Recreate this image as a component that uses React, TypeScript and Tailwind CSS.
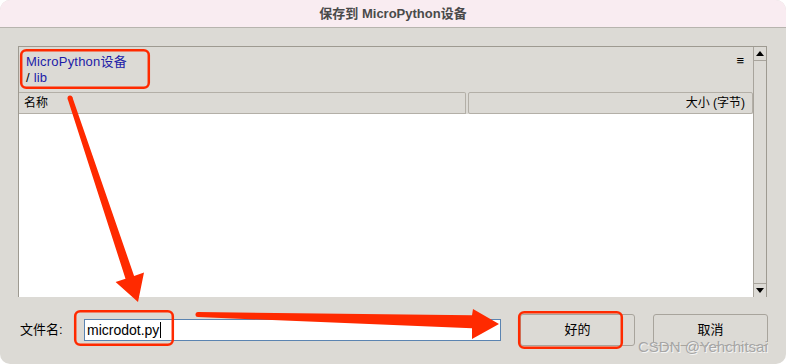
import React from "react";

function Annotations() {
  return (
    <svg
      className="absolute inset-0 pointer-events-none"
      width={786}
      height={364}
      viewBox="0 0 786 364"
    >
      <g fill="none" stroke="#ff2a00" strokeWidth={2.5}>
        <rect x={21.2} y={50.2} width={127.6} height={37.6} rx={5} />
        <rect x={75.2} y={311.2} width={97.6} height={33.6} rx={5} />
        <rect x={519.2} y={312.2} width={102.6} height={35.6} rx={5} />
      </g>
      <g fill="#ff2a00">
        <circle cx={70} cy={98} r={2.5} />
        <polygon points="72.4,97.2 134.1,275.9 144,272.6 138,302 115.6,282 125.5,278.7 67.6,98.8" />
        <circle cx={198} cy={314.5} r={2.5} />
        <polygon points="198,312 472,315.3 473,309 499,324 472,339 472,328.3 198,317" />
      </g>
    </svg>
  );
}

function Scrollbar() {
  return (
    <div className="w-[14px] flex flex-col bg-[#dcdad5] border-l border-[#a8a49c] border-r border-r-[#9e9a91]">
      <div className="h-[14px] flex items-center justify-center bg-[#dcdad5] border-b border-[#a8a49c]">
        <svg width="8" height="5" viewBox="0 0 8 5">
          <polygon points="0,5 8,5 4,0" fill="#000" />
        </svg>
      </div>
      <div className="flex-1" />
      <div className="h-[14px] flex items-center justify-center bg-[#dcdad5] border-t border-[#a8a49c]">
        <svg width="8" height="5" viewBox="0 0 8 5">
          <polygon points="0,0 8,0 4,5" fill="#000" />
        </svg>
      </div>
    </div>
  );
}

export default function App() {
  return (
    <div className="relative w-[786px] h-[364px] overflow-hidden bg-white">
      <div className="w-[786px] h-[364px] rounded-[10px] overflow-hidden bg-[#dcdad5] flex flex-col font-['Liberation_Sans','Noto_Sans_CJK_SC',sans-serif] text-black">
        <div className="h-[28px] shrink-0 bg-[#f9ecf1] border-b border-[#b7b4ae] flex items-center justify-center text-[13px] font-semibold text-[#4a4a4a]">
          保存到 MicroPython设备
        </div>

        <div className="pl-[18px] pt-[18px]">
          <div className="w-[749px] h-[251px] border-t border-l border-[#9e9a91] flex">
            <div className="flex-1 flex flex-col">
              <div className="h-[45px] flex justify-between items-start pl-[7px] pr-[9px] pt-[7px]">
                <div className="text-[13px] leading-[16px] tracking-[0.2px]">
                  <div className="text-[#1c1ca8]">MicroPython设备</div>
                  <div>
                    <span>/ </span>
                    <span className="text-[#1c1ca8]">lib</span>
                  </div>
                </div>
                <div className="text-[13px] leading-[16px] mt-[-1px]">≡</div>
              </div>
              <div className="h-[22px] flex text-[12px]">
                <div className="w-[447px] flex items-center pl-[5px] bg-[#dcdad5] border border-[#b3afa7] border-l-0 rounded-tr-[2px]">
                  名称
                </div>
                <div className="ml-[2px] flex-1 flex items-center justify-end pr-[7px] bg-[#dcdad5] border border-[#b3afa7] rounded-[2px]">
                  大小 (字节)
                </div>
              </div>
              <div className="flex-1 bg-white" />
            </div>
            <Scrollbar />
          </div>
        </div>

        <div className="mt-[17px] pl-[20px] flex items-center h-[32px]">
          <div className="w-[64px] text-[13px]">文件名:</div>
          <div className="w-[417px] h-[22px] border border-[#5b84b1] bg-white flex items-center pl-[2px] text-[14px]">
            <span>microdot.py</span>
            <span className="w-[1px] h-[16px] bg-black ml-[1px]" />
          </div>
          <div className="ml-[19px] w-[115px] h-[32px] flex items-center justify-center text-[13px] bg-[#dcdad5] border border-[#a8a49c] rounded-[3px]">
            好的
          </div>
          <div className="ml-[18px] w-[115px] h-[32px] flex items-center justify-center text-[13px] bg-[#dcdad5] border border-[#a8a49c] rounded-[3px]">
            取消
          </div>
        </div>
      </div>

      <Annotations />

      <div className="absolute left-[638px] top-[338px] text-[15px] leading-[18px] text-[#a6a6a6] [text-shadow:1px_1px_0_#f4f4f4] font-['Liberation_Sans',sans-serif] pointer-events-none">
        CSDN @Yehchitsai
      </div>
    </div>
  );
}
